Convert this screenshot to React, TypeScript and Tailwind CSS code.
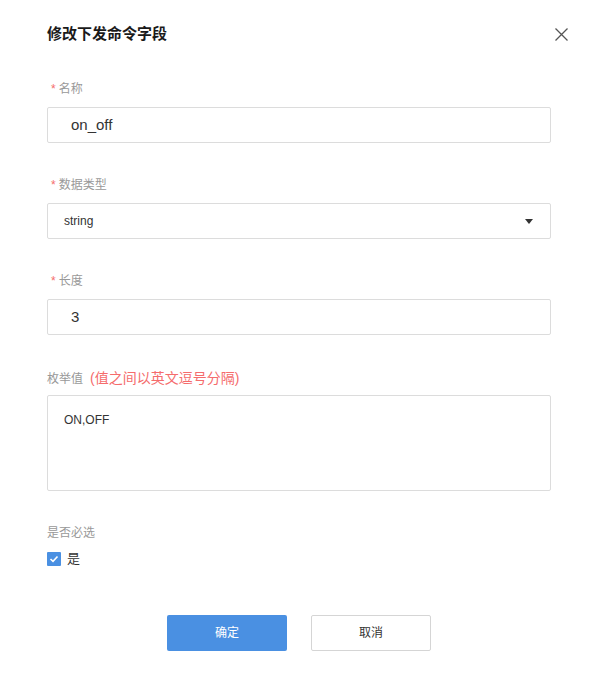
import React from "react";

const font = { fontFamily: '"Liberation Sans", "Noto Sans CJK SC", sans-serif' };

function Label({ text, required = true }: { text: string; required?: boolean }) {
  return (
    <div className="h-5 flex items-center text-[12px] text-[#999] pt-px">
      {required && <span className="ml-1 text-[#f56c6c] mr-[3px]">*</span>}
      <span>{text}</span>
    </div>
  );
}

export default function App() {
  return (
    <div
      className="w-[598px] h-[674px] bg-white px-[47px] pt-[22px] font-['Liberation_Sans','Noto_Sans_CJK_SC',sans-serif]"
      style={font}
    >
      <div className="h-6 flex items-center justify-between">
        <div className="text-[15px] font-bold text-[#1a1a1a]">修改下发命令字段</div>
        <button className="-mr-[17px] w-[13px] h-[13px] flex items-center justify-center">
          <svg width="13" height="13" viewBox="0 0 13 13">
            <path d="M0.5 0.5 L12.5 12.5 M12.5 0.5 L0.5 12.5" stroke="#555" strokeWidth="1.3" />
          </svg>
        </button>
      </div>

      <div className="mt-[32px]">
        <Label text="名称" />
        <div className="mt-[9px] h-9 border border-[#dcdcdc] rounded-[2px] flex items-center pl-[23px] text-[15px] text-[#333]">
          on_off
        </div>
      </div>

      <div className="mt-[31px]">
        <Label text="数据类型" />
        <div className="mt-[9px] h-9 border border-[#dcdcdc] rounded-[2px] flex items-center justify-between pl-[16px] pr-[17px] text-[12px] text-[#333]">
          <span>string</span>
          <svg width="8" height="5" viewBox="0 0 8 5">
            <path d="M0 0 L8 0 L4 5 Z" fill="#333" />
          </svg>
        </div>
      </div>

      <div className="mt-[31px]">
        <Label text="长度" />
        <div className="mt-[9px] h-9 border border-[#dcdcdc] rounded-[2px] flex items-center pl-[23px] text-[15px] text-[#333]">
          3
        </div>
      </div>

      <div className="mt-[33px]">
        <div className="h-5 flex items-center pt-px">
          <span className="text-[12px] text-[#999]">枚举值</span>
          <span className="ml-[7px] text-[14px] text-[#f56c6c]">(值之间以英文逗号分隔)</span>
        </div>
        <div className="mt-[7px] h-[96px] border border-[#dcdcdc] rounded-[2px] pt-[15px] px-[16px] text-[12px] leading-[18px] text-[#333]">
          ON,OFF
        </div>
      </div>

      <div className="mt-[31px]">
        <Label text="是否必选" required={false} />
        <div className="mt-[10px] flex items-center h-[14px]">
          <div className="w-[14px] h-[14px] bg-[#4a90e2] rounded-[1px] flex items-center justify-center">
            <svg width="10" height="8" viewBox="0 0 10 8">
              <path d="M1.5 4 L4 6.3 L8.5 1.5" stroke="white" strokeWidth="1.6" fill="none" />
            </svg>
          </div>
          <span className="ml-[6px] text-[13px] text-[#333]">是</span>
        </div>
      </div>

      <div className="mt-[49px] flex justify-center gap-[24px]">
        <button className="w-[120px] h-9 bg-[#4a90e2] rounded-[2px] text-white text-[12px]">确定</button>
        <button className="w-[120px] h-9 border border-[#d5d5d5] rounded-[2px] bg-white text-[#333] text-[12px]">取消</button>
      </div>
    </div>
  );
}
